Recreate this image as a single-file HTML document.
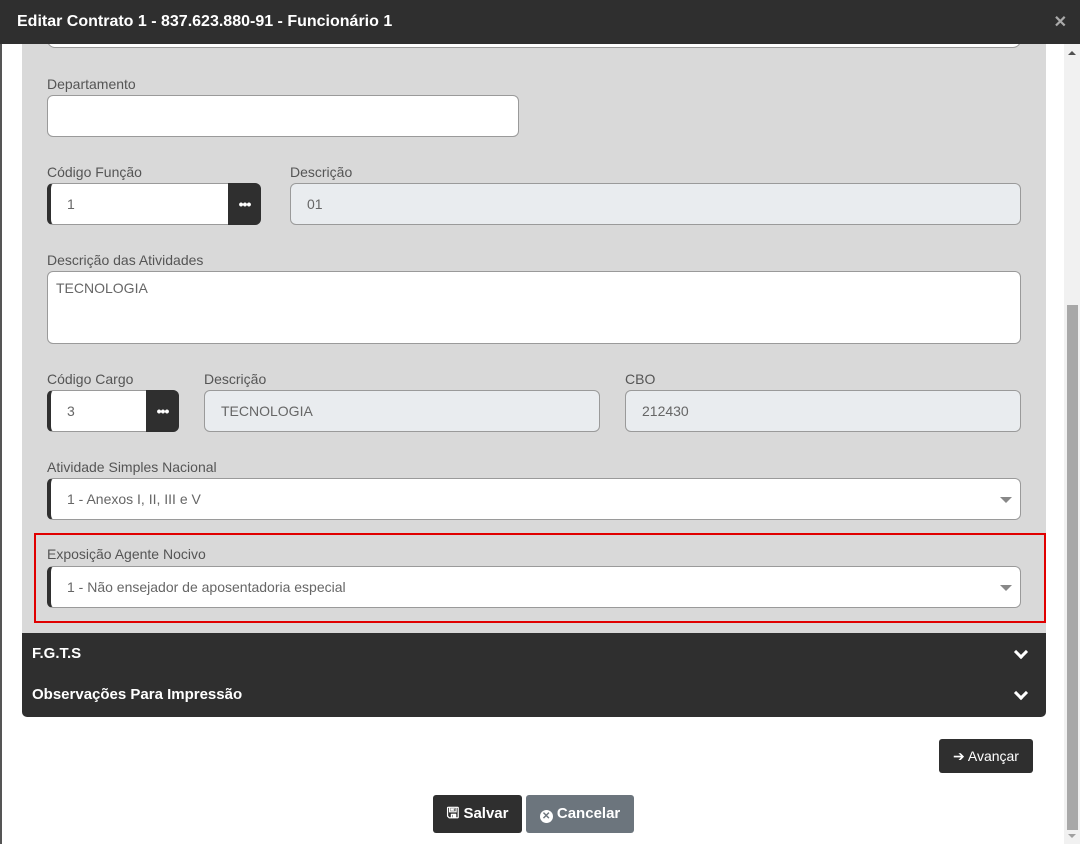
<!DOCTYPE html>
<html><head><meta charset="utf-8"><style>
*{box-sizing:border-box;margin:0;padding:0}
body{width:1080px;height:844px;overflow:hidden;background:#fff;font-family:"Liberation Sans",sans-serif;position:relative}
.abs{position:absolute}
.hdr{left:0;top:0;width:1080px;height:44px;background:#2f2f2f;color:#fff;font-weight:bold;font-size:16px;line-height:44px;padding-left:17px}
.x{right:13px;top:0;color:#aaa;font-size:16px;line-height:46px;font-weight:bold}
.panel{left:22px;top:44px;width:1024px;height:589px;background:#d9d9d9}
.lbl{font-size:14px;color:#555}
.in{background:#fff;border:1px solid #9a9a9a;border-radius:6px;font-size:14px;color:#666;padding-left:16px;display:flex;align-items:center}
.req{border-left:4px solid #2f2f2f}
.dis{background:#e9ecef}
.btn{background:#2f2f2f;border-radius:0 6px 6px 0;color:#fff;font-size:14px;display:flex;align-items:center;justify-content:center;font-weight:bold;letter-spacing:-1px}
.caret{position:absolute;right:8px;top:18px;width:0;height:0;border-left:6px solid transparent;border-right:6px solid transparent;border-top:6px solid #888}
.dark{left:22px;top:633px;width:1024px;height:84px;background:#2f2f2f;border-radius:0 0 5px 5px;color:#fff;font-weight:bold;font-size:15px}
.chev{position:absolute;right:20px;width:10px;height:10px;border-right:3px solid #fff;border-bottom:3px solid #fff;transform:rotate(45deg)}
</style></head><body>
<div class="abs" style="left:0;top:0;width:2px;height:844px;background:#555"></div>
<div class="abs panel"></div>
<div class="abs in" style="left:47px;top:20px;width:974px;height:28px;border-radius:8px"></div>
<div class="abs hdr">Editar Contrato 1 - 837.623.880-91 - Funcionário 1</div>
<div class="abs x">✕</div>

<div class="abs lbl" style="left:47px;top:76px">Departamento</div>
<div class="abs in" style="left:47px;top:95px;width:472px;height:42px"></div>

<div class="abs lbl" style="left:47px;top:164px">Código Função</div>
<div class="abs in req" style="left:47px;top:183px;width:214px;height:42px">1</div>
<div class="abs btn" style="left:228px;top:183px;width:33px;height:42px">•••</div>
<div class="abs lbl" style="left:290px;top:164px">Descrição</div>
<div class="abs in dis" style="left:290px;top:183px;width:731px;height:42px">01</div>

<div class="abs lbl" style="left:47px;top:252px">Descrição das Atividades</div>
<div class="abs in" style="left:47px;top:271px;width:974px;height:73px;align-items:flex-start;padding:8px 8px;font-size:14px">TECNOLOGIA</div>

<div class="abs lbl" style="left:47px;top:371px">Código Cargo</div>
<div class="abs in req" style="left:47px;top:390px;width:132px;height:42px">3</div>
<div class="abs btn" style="left:146px;top:390px;width:33px;height:42px">•••</div>
<div class="abs lbl" style="left:204px;top:371px">Descrição</div>
<div class="abs in dis" style="left:204px;top:390px;width:396px;height:42px">TECNOLOGIA</div>
<div class="abs lbl" style="left:625px;top:371px">CBO</div>
<div class="abs in dis" style="left:625px;top:390px;width:396px;height:42px">212430</div>

<div class="abs lbl" style="left:47px;top:459px">Atividade Simples Nacional</div>
<div class="abs in req" style="left:47px;top:478px;width:974px;height:42px">1 - Anexos I, II, III e V<span class="caret"></span></div>

<div class="abs" style="left:34px;top:533px;width:1012px;height:90px;border:2px solid #e00000"></div>
<div class="abs lbl" style="left:47px;top:546px">Exposição Agente Nocivo</div>
<div class="abs in req" style="left:47px;top:566px;width:974px;height:42px">1 - Não ensejador de aposentadoria especial<span class="caret"></span></div>

<div class="abs dark">
<div class="abs" style="left:10px;top:12px">F.G.T.S</div><span class="chev" style="top:14px"></span>
<div class="abs" style="left:10px;top:53px">Observações Para Impressão</div><span class="chev" style="top:55px"></span>
</div>

<div class="abs" style="left:939px;top:739px;width:94px;height:34px;background:#2f2f2f;border-radius:3px;color:#fff;font-size:14px;line-height:34px;text-align:center">➔ Avançar</div>
<div class="abs" style="left:433px;top:795px;width:89px;height:38px;background:#2f2f2f;border-radius:3px;color:#fff;font-size:15px;font-weight:bold;line-height:38px;text-align:center">🖫 Salvar</div>
<div class="abs" style="left:526px;top:795px;width:108px;height:38px;background:#6c757d;border-radius:3px;color:#fff;font-size:15px;font-weight:bold;line-height:38px;text-align:center"><span style="display:inline-block;width:13px;height:13px;border-radius:50%;background:#fff;color:#6c757d;font-size:10px;line-height:13px;vertical-align:-1px">✕</span> Cancelar</div>

<div class="abs" style="left:1064px;top:44px;width:16px;height:800px;background:#f1f1f1"></div>
<div class="abs" style="left:1067px;top:305px;width:11px;height:525px;background:#a8a8a8"></div>
<div class="abs" style="left:1068px;top:51px;width:0;height:0;border-left:4px solid transparent;border-right:4px solid transparent;border-bottom:4px solid #505050"></div>
<div class="abs" style="left:1068px;top:834px;width:0;height:0;border-left:4px solid transparent;border-right:4px solid transparent;border-top:4px solid #a0a0a0"></div>
</body></html>
